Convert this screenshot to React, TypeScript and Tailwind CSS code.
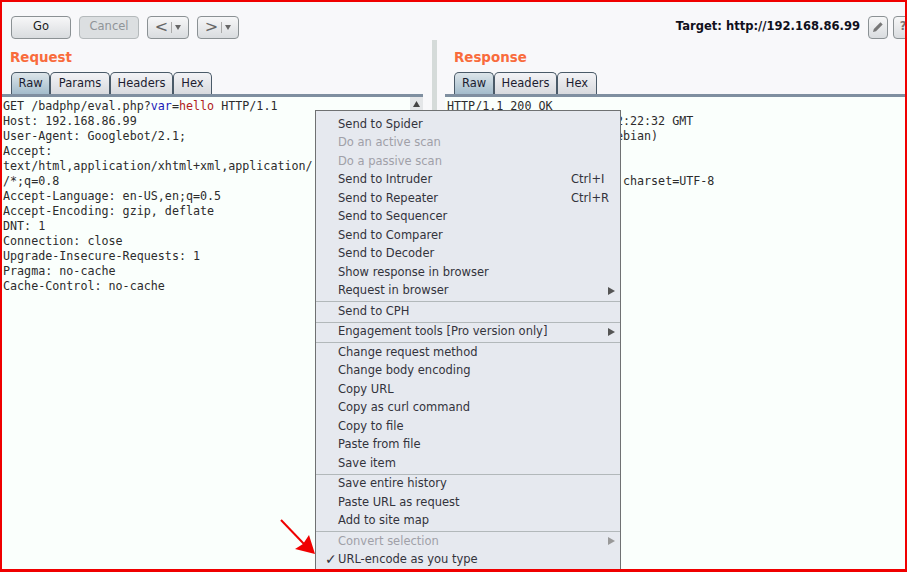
const sans = 'font-["DejaVu_Sans",sans-serif]'

const REQUEST_LINES = [
  'Host: 192.168.86.99',
  'User-Agent: Googlebot/2.1;',
  'Accept:',
  'text/html,application/xhtml+xml,application/',
  '/*;q=0.8',
  'Accept-Language: en-US,en;q=0.5',
  'Accept-Encoding: gzip, deflate',
  'DNT: 1',
  'Connection: close',
  'Upgrade-Insecure-Requests: 1',
  'Pragma: no-cache',
  'Cache-Control: no-cache',
]

const RESPONSE_LINES = [
  'HTTP/1.1 200 OK',
  'Date: Wed, 17 Oct 2018 12:22:32 GMT',
  'Server: Apache/2.4.25 (Debian)',
  'X-Powered-By: PHP/7.0.30',
  'Content-Length: 0',
  'Content-Type: text/html; charset=UTF-8',
]

interface MenuItem {
  label: string
  disabled?: boolean
  shortcut?: string
  submenu?: boolean
  checked?: boolean
}

const MENU_GROUPS: MenuItem[][] = [
  [
    { label: 'Send to Spider' },
    { label: 'Do an active scan', disabled: true },
    { label: 'Do a passive scan', disabled: true },
    { label: 'Send to Intruder', shortcut: 'Ctrl+I' },
    { label: 'Send to Repeater', shortcut: 'Ctrl+R' },
    { label: 'Send to Sequencer' },
    { label: 'Send to Comparer' },
    { label: 'Send to Decoder' },
    { label: 'Show response in browser' },
    { label: 'Request in browser', submenu: true },
  ],
  [{ label: 'Send to CPH' }],
  [{ label: 'Engagement tools [Pro version only]', submenu: true }],
  [
    { label: 'Change request method' },
    { label: 'Change body encoding' },
    { label: 'Copy URL' },
    { label: 'Copy as curl command' },
    { label: 'Copy to file' },
    { label: 'Paste from file' },
    { label: 'Save item' },
  ],
  [
    { label: 'Save entire history' },
    { label: 'Paste URL as request' },
    { label: 'Add to site map' },
  ],
  [
    { label: 'Convert selection', disabled: true, submenu: true },
    { label: 'URL-encode as you type', checked: true },
  ],
]

function ToolButton({ width, disabled, children }: { width: string; disabled?: boolean; children: React.ReactNode }) {
  return (
    <button
      className={`${width} h-[23px] flex items-center justify-center rounded-[4px] border text-[11.5px] shrink-0 ${
        disabled
          ? 'border-[#b4b9bb] bg-[#dcdfe1] text-[#8f9498]'
          : 'border-[#8b9194] bg-linear-to-b from-[#f7f7f8] to-[#d9dcdf] text-[#1c1c1c]'
      }`}
    >
      {children}
    </button>
  )
}

function HistoryButton({ glyph }: { glyph: string }) {
  return (
    <ToolButton width="w-[42px]">
      <span className="text-[16px] leading-none text-[#666]">{glyph}</span>
      <span className="w-px h-[11px] bg-[#aaa] mx-[3px]" />
      <svg width="6" height="5" viewBox="0 0 6 5"><path d="M0 0h6L3 5z" fill="#666" /></svg>
    </ToolButton>
  )
}

function Tabs({ items }: { items: [string, string][] }) {
  return (
    <div className="flex items-end h-[23px]">
      {items.map(([label, width], i) => (
        <div
          key={label}
          className={`${width} h-[22px] flex items-center justify-center rounded-t-[5px] border border-b-0 border-[#4a5a68] text-[11.5px] text-[#1c1c30] ${
            i === 0 ? 'bg-linear-to-b from-[#dde5ea] to-[#a3bccb]' : 'bg-linear-to-b from-[#f3f3f6] to-[#d8dade]'
          }`}
        >
          {label}
        </div>
      ))}
    </div>
  )
}

function Menu() {
  return (
    <div className={`absolute left-[313px] top-[108px] w-[306px] border border-[#6f7172] bg-[#e6e9ef] pt-[4px] text-[11.5px] text-[#33333c] ${sans}`}>
      {MENU_GROUPS.map((group, g) => (
        <div key={g} className={g > 0 ? 'border-t border-[#b2b8ba] mt-px' : ''}>
          {group.map((item) => (
            <div
              key={item.label}
              className={`relative h-[18.5px] flex items-center pl-[22px] whitespace-nowrap ${item.disabled ? 'text-[#a0a0a8]' : ''}`}
            >
              {item.checked && <span className="absolute left-[9px] text-[14px] font-bold">✓</span>}
              {item.label}
              {item.shortcut && <span className="absolute left-[255px]">{item.shortcut}</span>}
              {item.submenu && (
                <svg className="absolute left-[292px]" width="7" height="8" viewBox="0 0 7 8">
                  <path d="M0 0l7 4-7 4z" fill={item.disabled ? '#999' : '#555'} />
                </svg>
              )}
            </div>
          ))}
        </div>
      ))}
    </div>
  )
}

export default function App() {
  return (
    <div className={`relative w-[907px] h-[572px] border-2 border-b-[3px] border-[#f00000] bg-[#f8f8fa] overflow-hidden ${sans}`}>
      {/* Toolbar */}
      <div className="flex items-center h-[24px] mt-[13px] pl-[9px] gap-2">
        <ToolButton width="w-[60px]">Go</ToolButton>
        <ToolButton width="w-[60px]" disabled>Cancel</ToolButton>
        <HistoryButton glyph="<" />
        <HistoryButton glyph=">" />
        <div className="ml-auto flex items-center gap-[5px] -mr-[8px]">
          <span className="mr-[3px] text-[11.55px] font-bold text-[#10101c] whitespace-nowrap">Target: http://192.168.86.99</span>
          <ToolButton width="w-[20px]">
            <svg width="12" height="12" viewBox="0 0 12 12"><path d="M1 11l.8-3L8.5 1.3l2.2 2.2L4 10.2z" fill="#777" /></svg>
          </ToolButton>
          <ToolButton width="w-[20px]"><span className="text-[#777] font-bold">?</span></ToolButton>
        </div>
      </div>

      {/* Panes */}
      <div className="flex mt-px h-[534px]">
        <div className="w-[421px] shrink-0 pt-[9px]">
          <div className="h-[22px] pl-[8px] text-[13.4px] font-bold leading-[18px] text-[#f96b3c]">Request</div>
          <div className="pl-[9px]">
            <Tabs items={[['Raw', 'w-[39px]'], ['Params', 'w-[60px]'], ['Headers', 'w-[63px]'], ['Hex', 'w-[39px]']]} />
          </div>
          <div className="h-[3px] bg-[#7f8fa0]" />
          <div className="relative bg-[#fafffc] h-full pl-px pt-[2px] font-['DejaVu_Sans_Mono',monospace] text-[11.7px] leading-[15px] text-[#2c2c2c] whitespace-pre">
            <div>
              GET /badphp/eval.php?<span className="text-[#1a1ab8]">var</span>=<span className="text-[#b02020]">hello</span> HTTP/1.1
            </div>
            {REQUEST_LINES.map((line) => (
              <div key={line}>{line}</div>
            ))}
            <div className="absolute right-0 top-0 w-[13px] h-[14px] flex items-center justify-center bg-[#e4e6e8]">
              <svg width="7" height="6" viewBox="0 0 7 6"><path d="M3.5 0L7 6H0z" fill="#444" /></svg>
            </div>
          </div>
        </div>

        <div className="w-[5px] ml-[9px] mr-[8px] shrink-0 bg-[#d5dbd9]" />

        <div className="flex-1 pt-[9px]">
          <div className="h-[22px] pl-[9px] text-[13.4px] font-bold leading-[18px] text-[#f96b3c]">Response</div>
          <div className="pl-[9px]">
            <Tabs items={[['Raw', 'w-[40px]'], ['Headers', 'w-[63px]'], ['Hex', 'w-[40px]']]} />
          </div>
          <div className="h-[3px] bg-[#7f8fa0]" />
          <div className="bg-[#fafffc] h-full pl-[2px] pt-[2px] font-['DejaVu_Sans_Mono',monospace] text-[11.7px] leading-[15px] text-[#2c2c2c] whitespace-pre">
            {RESPONSE_LINES.map((line) => (
              <div key={line}>{line}</div>
            ))}
          </div>
        </div>
      </div>

      <Menu />

      {/* Red annotation arrow */}
      <svg className="absolute left-[258px] top-[498px]" width="60" height="60" viewBox="258 498 60 60">
        <path d="M279 518L302 542" stroke="#f00000" strokeWidth="2" fill="none" />
        <path d="M313 552L293 547L301 542L307 533z" fill="#f00000" />
      </svg>
    </div>
  )
}
